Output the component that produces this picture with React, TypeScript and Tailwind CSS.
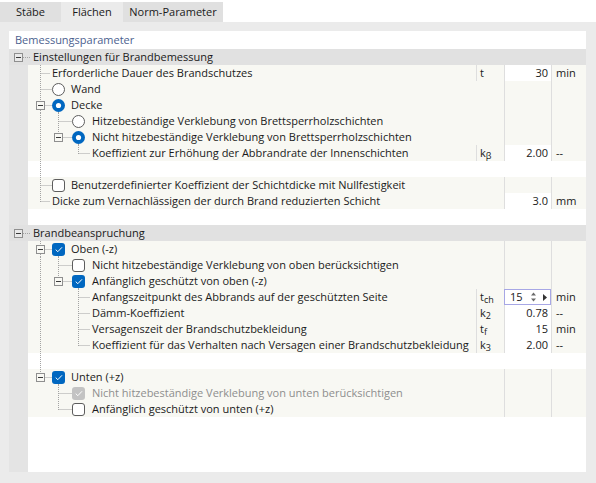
import React from "react";

type Icon = "radio-on" | "radio-off" | "cb-on" | "cb-off" | "cb-dis";

type Item = {
  kind: "item";
  level: 1 | 2 | 3;
  text: string;
  anc: number[];
  last?: boolean;
  expand?: boolean;
  icon?: Icon;
  sym?: React.ReactNode;
  val?: string;
  unit?: string;
  spin?: boolean;
  disabled?: boolean;
};

type Row = { kind: "group"; text: string } | { kind: "blank"; anc: number[] } | Item;

// x of the dotted tree line for each level, inside the row svg (svg starts at page x=28)
const LX: Record<number, number> = { 1: 12.5, 2: 30.5, 3: 50.5 };
const DOT = { stroke: "#a3a3a3", strokeDasharray: "1 1", strokeWidth: 1 };

function Sym({ b, s }: { b: string; s: string }) {
  return (
    <span>
      {b}
      <span className="relative top-[2px] text-[9px]">{s}</span>
    </span>
  );
}

const rows: Row[] = [
  { kind: "group", text: "Einstellungen für Brandbemessung" },
  { kind: "item", level: 1, text: "Erforderliche Dauer des Brandschutzes", anc: [], sym: "t", val: "30", unit: "min" },
  { kind: "item", level: 1, text: "Wand", anc: [], icon: "radio-off" },
  { kind: "item", level: 1, text: "Decke", anc: [], icon: "radio-on", expand: true },
  { kind: "item", level: 2, text: "Hitzebeständige Verklebung von Brettsperrholzschichten", anc: [1], icon: "radio-off" },
  { kind: "item", level: 2, text: "Nicht hitzebeständige Verklebung von Brettsperrholzschichten", anc: [1], icon: "radio-on", expand: true, last: true },
  { kind: "item", level: 3, text: "Koeffizient zur Erhöhung der Abbrandrate der Innenschichten", anc: [1], last: true, sym: <Sym b="k" s="β" />, val: "2.00", unit: "--" },
  { kind: "blank", anc: [1] },
  { kind: "item", level: 1, text: "Benutzerdefinierter Koeffizient der Schichtdicke mit Nullfestigkeit", anc: [], icon: "cb-off" },
  { kind: "item", level: 1, text: "Dicke zum Vernachlässigen der durch Brand reduzierten Schicht", anc: [], last: true, val: "3.0", unit: "mm" },
  { kind: "blank", anc: [] },
  { kind: "group", text: "Brandbeanspruchung" },
  { kind: "item", level: 1, text: "Oben (-z)", anc: [], icon: "cb-on", expand: true },
  { kind: "item", level: 2, text: "Nicht hitzebeständige Verklebung von oben berücksichtigen", anc: [1], icon: "cb-off" },
  { kind: "item", level: 2, text: "Anfänglich geschützt von oben (-z)", anc: [1], icon: "cb-on", expand: true, last: true },
  { kind: "item", level: 3, text: "Anfangszeitpunkt des Abbrands auf der geschützten Seite", anc: [1], sym: <Sym b="t" s="ch" />, val: "15", unit: "min", spin: true },
  { kind: "item", level: 3, text: "Dämm-Koeffizient", anc: [1], sym: <Sym b="k" s="2" />, val: "0.78", unit: "--" },
  { kind: "item", level: 3, text: "Versagenszeit der Brandschutzbekleidung", anc: [1], sym: <Sym b="t" s="f" />, val: "15", unit: "min" },
  { kind: "item", level: 3, text: "Koeffizient für das Verhalten nach Versagen einer Brandschutzbekleidung", anc: [1], last: true, sym: <Sym b="k" s="3" />, val: "2.00", unit: "--" },
  { kind: "blank", anc: [1] },
  { kind: "item", level: 1, text: "Unten (+z)", anc: [], icon: "cb-on", expand: true, last: true },
  { kind: "item", level: 2, text: "Nicht hitzebeständige Verklebung von unten berücksichtigen", anc: [], icon: "cb-dis", disabled: true },
  { kind: "item", level: 2, text: "Anfänglich geschützt von unten (+z)", anc: [], icon: "cb-off", last: true },
];

function IconShape({ icon, cx }: { icon: Icon; cx: number }) {
  const x = cx - 6;
  if (icon === "radio-off") return <circle cx={cx} cy={8.5} r={6} fill="#fff" stroke="#5d5d5d" />;
  if (icon === "radio-on")
    return (
      <g>
        <circle cx={cx} cy={8.5} r={6.5} fill="#0067c0" />
        <circle cx={cx} cy={8.5} r={2.6} fill="#fff" />
      </g>
    );
  if (icon === "cb-off") return <rect x={x} y={2.5} width={12} height={12} rx={2.5} fill="#fff" stroke="#5d5d5d" />;
  const fill = icon === "cb-on" ? "#0067c0" : "#c3c3c3";
  return (
    <g>
      <rect x={x - 0.5} y={2} width={13} height={13} rx={3} fill={fill} />
      <path d={`M${x + 3.2} 8.6l2.1 2.1l4.2 -4.4`} fill="none" stroke="#fff" strokeWidth={1} />
    </g>
  );
}

function Tree({ r }: { r: Item }) {
  const X = LX[r.level];
  const w = r.icon || r.level === 3 ? (r.level === 1 ? 43 : 64) : 24;
  const end = r.icon ? (r.level === 1 ? 24 : 44) : r.level === 1 ? 22 : 62;
  const iconCx = r.level === 1 ? 30.5 : 50.5;
  return (
    <svg width={w} height={16} className="shrink-0">
      {r.anc.map((a) => (
        <line key={a} x1={LX[a]} x2={LX[a]} y1={0} y2={16} {...DOT} />
      ))}
      {r.expand ? (
        <g>
          <line x1={X} x2={X} y1={0} y2={4} {...DOT} />
          {!r.last && <line x1={X} x2={X} y1={13} y2={16} {...DOT} />}
          <line x1={X + 5} x2={end} y1={8.5} y2={8.5} {...DOT} />
          <rect x={X - 4} y={4.5} width={8} height={8} fill="#f8f8f3" stroke="#8f8f8f" />
          <line x1={X - 2.5} x2={X + 2.5} y1={8.5} y2={8.5} stroke="#3a3a3a" />
          <line x1={iconCx} x2={iconCx} y1={15} y2={16} {...DOT} />
        </g>
      ) : (
        <g>
          <line x1={X} x2={X} y1={0} y2={r.last ? 9 : 16} {...DOT} />
          <line x1={X + 1} x2={end} y1={8.5} y2={8.5} {...DOT} />
        </g>
      )}
      {r.icon && <IconShape icon={r.icon} cx={iconCx} />}
    </svg>
  );
}

function Spinner({ v }: { v: string }) {
  return (
    <div className="flex w-[47px] shrink-0 items-center border border-[#a7a7e5] bg-white pl-[5px] text-[#1a1a1a]">
      <span className="flex-1">{v}</span>
      <svg width={19} height={14} className="mr-[2px]">
        <path d="M2 5.5h5l-2.5 -3z" fill="#6a6a6a" />
        <path d="M2 8.5h5l-2.5 3z" fill="#6a6a6a" />
        <path d="M14 4v7l4 -3.5z" fill="#333" />
      </svg>
    </div>
  );
}

function ItemRow({ r }: { r: Item }) {
  return (
    <div className="flex h-[16px] leading-[16px]">
      <div className="w-[19px] shrink-0 bg-[#e4e4e4]" />
      <div className="flex w-[448px] shrink-0 items-center overflow-hidden bg-[#f8f8f3]">
        <Tree r={r} />
        <span className={r.disabled ? "whitespace-nowrap text-[#8e8e8e]" : "whitespace-nowrap text-[#1a1a1a]"}>
          {r.text}
        </span>
      </div>
      <div
        className={
          r.sym
            ? "w-[28px] shrink-0 border-l border-[#dedede] bg-[#f8f8f3] pl-[3px] text-[#1a1a1a]"
            : "w-[28px] shrink-0 border-l border-transparent bg-[#f8f8f3]"
        }
      >
        {r.sym}
      </div>
      {r.spin ? (
        <Spinner v={r.val!} />
      ) : (
        <div
          className={
            r.val
              ? "w-[47px] shrink-0 border-l border-[#dedede] bg-white pr-[3px] text-right text-[#1a1a1a]"
              : "w-[47px] shrink-0 border-l border-[#dedede] bg-[#f8f8f3]"
          }
        >
          {r.val}
        </div>
      )}
      <div className="w-[35px] shrink-0 border-l border-[#dedede] bg-[#f8f8f3] pl-[4px] text-[#1a1a1a]">{r.unit}</div>
    </div>
  );
}

function BlankRow({ anc }: { anc: number[] }) {
  return (
    <div className="flex h-[16px]">
      <div className="w-[19px] shrink-0 bg-[#e4e4e4]" />
      <svg width={24} height={16} className="shrink-0">
        {anc.map((a) => (
          <line key={a} x1={LX[a]} x2={LX[a]} y1={0} y2={16} {...DOT} />
        ))}
      </svg>
    </div>
  );
}

function GroupRow({ text }: { text: string }) {
  return (
    <div className="flex h-[16px] items-center bg-[#e1e1e1] leading-[16px] text-[#1a1a1a]">
      <svg width={24} height={16} className="shrink-0">
        <line x1={14} x2={22} y1={8.5} y2={8.5} {...DOT} />
        <rect x={5.5} y={4.5} width={8} height={8} fill="#e9e9e9" stroke="#8f8f8f" />
        <line x1={7} x2={12} y1={8.5} y2={8.5} stroke="#3a3a3a" />
      </svg>
      <span>{text}</span>
    </div>
  );
}

export default function App() {
  return (
    <div
      className="h-[483px] w-[596px] overflow-hidden bg-white text-[11px]"
      style={{ fontFamily: '"Open Sans", "Noto Sans", sans-serif' }}
    >
      <div className="flex h-[22px] pt-[2px] leading-[20px] text-[#1a1a1a]">
        <div className="w-[61px] bg-[#e0e0e0] text-center">Stäbe</div>
        <div className="w-[62px] bg-[#ebebeb] text-center">Flächen</div>
        <div className="w-[100px] bg-[#e0e0e0] text-center">Norm-Parameter</div>
      </div>
      <div className="h-[461px] bg-[#ebebeb] pb-[11px] pl-[9px] pr-[10px] pt-[9px]">
        <div className="flex h-full flex-col bg-white">
          <div className="h-[18px] pl-[6px] leading-[18px] text-[#4c5f8f]">Bemessungsparameter</div>
          {rows.map((r, i) =>
            r.kind === "group" ? (
              <GroupRow key={i} text={r.text} />
            ) : r.kind === "blank" ? (
              <BlankRow key={i} anc={r.anc} />
            ) : (
              <ItemRow key={i} r={r} />
            )
          )}
          <div className="flex flex-1">
            <div className="w-[19px] bg-[#e4e4e4]" />
          </div>
        </div>
      </div>
    </div>
  );
}
